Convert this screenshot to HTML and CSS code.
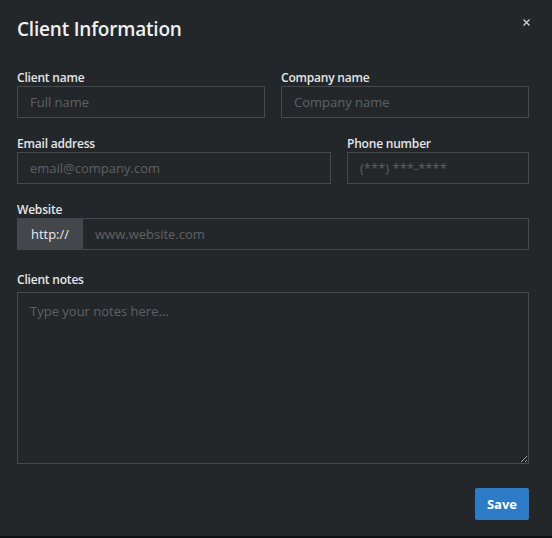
FILE: index.html
```
<!DOCTYPE html>
<html lang="en">
<head>
<meta charset="utf-8">
<title>Client Information</title>
<link rel="stylesheet" href="styles.css">
</head>
<body>
<div class="modal">
  <div class="modal-header">
    <h1 class="modal-title">Client Information</h1>
    <button class="close" type="button" aria-label="Close">
      <svg width="7" height="7" viewBox="0 0 7 7"><path d="M0.5 0.5L6.5 6.5M6.5 0.5L0.5 6.5" stroke="#cfd2d5" stroke-width="1.3" fill="none"/></svg>
    </button>
  </div>
  <form class="form">
    <div class="row row-half">
      <div class="field">
        <label class="label">Client name</label>
        <input class="input" type="text" placeholder="Full name">
      </div>
      <div class="field">
        <label class="label">Company name</label>
        <input class="input" type="text" placeholder="Company name">
      </div>
    </div>
    <div class="row row-contact">
      <div class="field">
        <label class="label">Email address</label>
        <input class="input" type="text" placeholder="email@company.com">
      </div>
      <div class="field">
        <label class="label">Phone number</label>
        <input class="input" type="text" placeholder="(***) ***-****">
      </div>
    </div>
    <div class="row">
      <div class="field">
        <label class="label">Website</label>
        <div class="input-group">
          <span class="addon">http://</span>
          <input class="input input-grow" type="text" placeholder="www.website.com">
        </div>
      </div>
    </div>
    <div class="row row-notes">
      <div class="field">
        <label class="label label-notes">Client notes</label>
        <textarea class="textarea" placeholder="Type your notes here..."></textarea>
      </div>
    </div>
    <div class="footer">
      <button class="btn-save" type="button">Save</button>
    </div>
  </form>
</div>
</body>
</html>
```
FILE: styles.css
```
html {
  background: #0f1113;
}
body {
  margin: 0;
  font-family: "Open Sans", "Noto Sans", sans-serif;
}
.modal {
  box-sizing: border-box;
  width: 552px;
  height: 536px;
  background: #24272a;
  padding: 16px 23px 16px 17px;
}
.modal-header {
  display: flex;
  justify-content: space-between;
  align-items: flex-start;
  margin-bottom: 27px;
}
.modal-title {
  margin: 0;
  font-size: 19px;
  line-height: 26px;
  font-weight: 600;
  letter-spacing: -0.2px;
  color: #eef0f2;
}
.close {
  margin: 3px -1px 0 0;
  padding: 0;
  width: 7px;
  height: 7px;
  border: 0;
  background: none;
  display: flex;
}
.form {
  display: flex;
  flex-direction: column;
}
.row {
  display: grid;
  grid-template-columns: 1fr;
  gap: 16px;
  margin-bottom: 17px;
}
.row-half {
  grid-template-columns: 1fr 1fr;
}
.row-contact {
  grid-template-columns: 314fr 182fr;
}
.row-notes {
  margin-top: 4px;
  margin-bottom: 24px;
}
.field {
  display: flex;
  flex-direction: column;
  min-width: 0;
}
.label {
  font-size: 12px;
  line-height: 16px;
  font-weight: 600;
  letter-spacing: -0.2px;
  color: #e4e6e8;
  margin-top: 1px;
  margin-bottom: 0;
}
.label-notes {
  margin-bottom: 4px;
}
.input {
  box-sizing: border-box;
  height: 32px;
  width: 100%;
  margin: 0;
  padding: 0 12px;
  border: 1px solid #46494d;
  border-radius: 0;
  background: transparent;
  color: #e4e6e8;
  font-family: "Open Sans", "Noto Sans", sans-serif;
  font-size: 13px;
  outline: none;
}
.input::placeholder,
.textarea::placeholder {
  color: #5d6165;
}
.input-group {
  display: flex;
}
.addon {
  box-sizing: border-box;
  width: 65px;
  height: 32px;
  flex: none;
  display: flex;
  align-items: center;
  justify-content: center;
  background: #43474b;
  color: #e8eaec;
  font-size: 13px;
  border: 1px solid #43474b;
  border-right: 0;
}
.input-grow {
  flex: 1;
}
.textarea {
  display: block;
  box-sizing: border-box;
  width: 100%;
  height: 172px;
  margin: 0;
  padding: 8px 12px;
  border: 1px solid #46494d;
  border-radius: 0;
  background: transparent;
  color: #e4e6e8;
  font-family: "Open Sans", "Noto Sans", sans-serif;
  font-size: 13px;
  line-height: 20px;
  outline: none;
}
.footer {
  display: flex;
  justify-content: flex-end;
}
.btn-save {
  height: 32px;
  padding: 0 12px;
  border: 0;
  border-radius: 2px;
  background: #2b7bc6;
  color: #ffffff;
  font-family: "Open Sans", "Noto Sans", sans-serif;
  font-size: 13px;
  font-weight: 700;
}
```
